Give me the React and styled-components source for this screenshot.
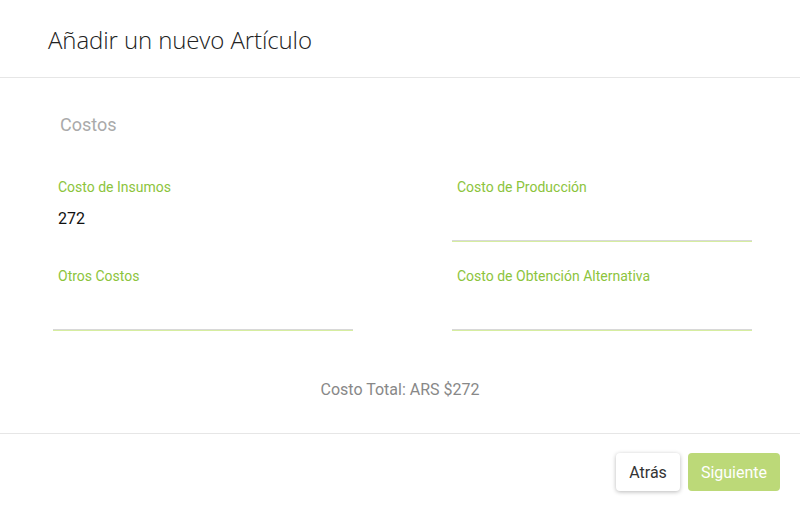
import React from "react"
import styled, { createGlobalStyle } from "styled-components"

const Global = createGlobalStyle`
  html, body {
    margin: 0;
    padding: 0;
    background: #fff;
  }
  body {
    font-family: Roboto, "Liberation Sans", sans-serif;
  }
  * { box-sizing: border-box; }
`

const Modal = styled.div`
  width: 800px;
  height: 510px;
  display: flex;
  flex-direction: column;
  background: #fff;
  overflow: hidden;
`

const Header = styled.header`
  height: 78px;
  flex: none;
  display: flex;
  align-items: center;
  padding: 2px 48px 0;
  border-bottom: 1px solid #e6e6e6;
`

const Title = styled.h1`
  margin: 0;
  font-family: "Open Sans", sans-serif;
  font-weight: 300;
  font-size: 24px;
  letter-spacing: -0.1px;
  color: #222;
`

const Body = styled.main`
  flex: 1;
  padding: 35px 48px 0 53px;
`

const SectionTitle = styled.h2`
  margin: 0 0 40px;
  padding-left: 7px;
  font-size: 18px;
  line-height: 24px;
  font-weight: 400;
  color: #aaa;
`

const Grid = styled.div`
  display: grid;
  grid-template-columns: 300px 300px;
  column-gap: 99px;
  row-gap: 25px;
`

const Field = styled.label`
  display: flex;
  flex-direction: column;
`

const Label = styled.span`
  padding-left: 5px;
  font-size: 14px;
  line-height: 20px;
  color: #8cc43c;
`

const Input = styled.div`
  height: 44px;
  padding: 10px 5px 0;
  font-size: 16px;
  line-height: 24px;
  color: #111;
  border-bottom: 1px solid ${p => (p.$bare ? "transparent" : "#d8d8d8")};
  box-shadow: ${p => (p.$bare ? "none" : "0 1px 0 #d6eda0")};
`

const Total = styled.p`
  margin: 49px 0 0;
  margin-left: -5px;
  text-align: center;
  font-size: 16px;
  line-height: 22px;
  color: #888;
`

const Footer = styled.footer`
  height: 77px;
  flex: none;
  display: flex;
  justify-content: flex-end;
  align-items: center;
  gap: 8px;
  padding: 0 20px;
  border-top: 1px solid #e6e6e6;
`

const Button = styled.button`
  height: 38px;
  padding: 0 13px;
  border: none;
  border-radius: 4px;
  font-family: Roboto, sans-serif;
  font-size: 16px;
  background: ${p => (p.$primary ? "#bcd978" : "#fff")};
  color: ${p => (p.$primary ? "#fff" : "#333")};
  box-shadow: ${p => (p.$primary ? "none" : "0 1px 4px rgba(0,0,0,0.28)")};
`

const fields = [
  { label: "Costo de Insumos", value: "272", bare: true },
  { label: "Costo de Producción", value: "" },
  { label: "Otros Costos", value: "" },
  { label: "Costo de Obtención Alternativa", value: "" },
]

export default function App() {
  return (
    <>
      <Global />
      <Modal>
        <Header>
          <Title>Añadir un nuevo Artículo</Title>
        </Header>
        <Body>
          <SectionTitle>Costos</SectionTitle>
          <Grid>
            {fields.map(f => (
              <Field key={f.label}>
                <Label>{f.label}</Label>
                <Input $bare={f.bare}>{f.value}</Input>
              </Field>
            ))}
          </Grid>
          <Total>Costo Total: ARS $272</Total>
        </Body>
        <Footer>
          <Button>Atrás</Button>
          <Button $primary>Siguiente</Button>
        </Footer>
      </Modal>
    </>
  )
}
